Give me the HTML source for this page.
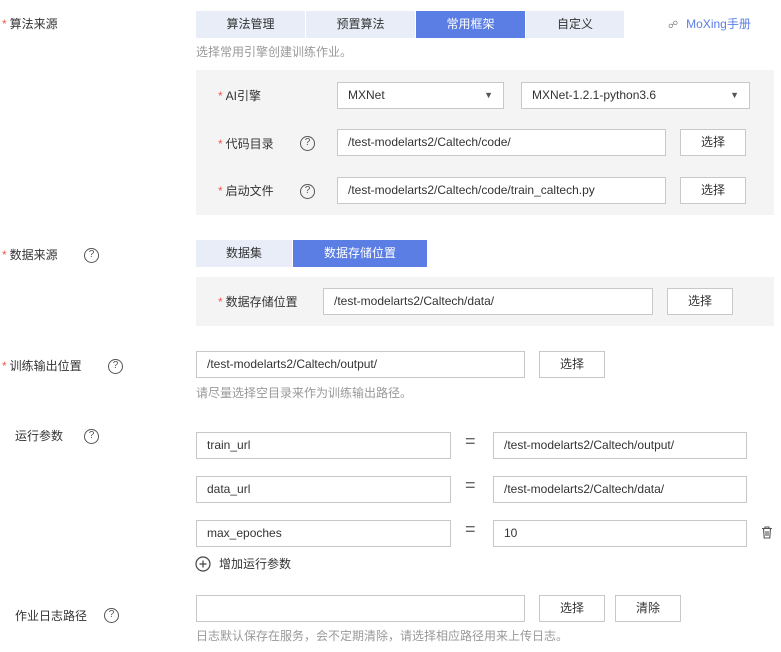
<!DOCTYPE html>
<html><head><meta charset="utf-8"><style>
*{box-sizing:border-box;margin:0;padding:0}
body{width:781px;height:652px;background:#fff;position:relative;overflow:hidden;font-family:"Liberation Sans","Noto Sans CJK SC",sans-serif;font-size:12px;color:#333}
.a{position:absolute}
.lbl{position:absolute;line-height:16px;white-space:nowrap}
.st{color:#e8604c;margin-right:3px}
.tab{position:absolute;height:27px;line-height:27px;text-align:center;background:#e8edf8;color:#333}
.tab.on{background:#5b7ee5;color:#fff}
.in{position:absolute;height:27px;border:1px solid #c8c8c8;background:#fff;line-height:25px;padding-left:10px;color:#333;white-space:nowrap}
.btn{position:absolute;height:27px;border:1px solid #c8c8c8;background:#fff;line-height:25px;text-align:center;color:#333}
.hint{position:absolute;color:#999;line-height:14px;white-space:nowrap}
.q{position:absolute;width:15px;height:15px;border:1.3px solid #555;border-radius:50%;font-size:10px;line-height:12px;text-align:center;color:#555}
.panel{position:absolute;background:#f4f4f4}
.arr{position:absolute;right:10px;top:0;font-size:9px;color:#555}
.eq{position:absolute;font-size:18px;color:#666;line-height:18px}
</style></head><body>
<div class="lbl" style="left:2px;top:16px"><span class="st">*</span>算法来源</div>
<div class="tab" style="left:196px;top:11px;width:109px">算法管理</div>
<div class="tab" style="left:306px;top:11px;width:109px">预置算法</div>
<div class="tab on" style="left:416px;top:11px;width:109px">常用框架</div>
<div class="tab" style="left:526px;top:11px;width:98px">自定义</div>
<div class="lbl" style="left:668px;top:16px;color:#5b7ee5"><span style="color:#888;font-size:10px;margin-right:8px">&#x260D;</span>MoXing手册</div>
<div class="hint" style="left:196px;top:45px">选择常用引擎创建训练作业。</div>
<div class="panel" style="left:196px;top:70px;width:578px;height:145px"></div>
<div class="lbl" style="left:218px;top:88px"><span class="st">*</span>AI引擎</div>
<div class="in" style="left:337px;top:82px;width:167px">MXNet<span class="arr">▼</span></div>
<div class="in" style="left:521px;top:82px;width:229px">MXNet-1.2.1-python3.6<span class="arr">▼</span></div>
<div class="lbl" style="left:218px;top:136px"><span class="st">*</span>代码目录</div>
<div class="q" style="left:300px;top:136px">?</div>
<div class="in" style="left:337px;top:129px;width:329px">/test-modelarts2/Caltech/code/</div>
<div class="btn" style="left:680px;top:129px;width:66px">选择</div>
<div class="lbl" style="left:218px;top:183px"><span class="st">*</span>启动文件</div>
<div class="q" style="left:300px;top:184px">?</div>
<div class="in" style="left:337px;top:177px;width:329px">/test-modelarts2/Caltech/code/train_caltech.py</div>
<div class="btn" style="left:680px;top:177px;width:66px">选择</div>

<div class="lbl" style="left:2px;top:247px"><span class="st">*</span>数据来源</div>
<div class="q" style="left:84px;top:248px">?</div>
<div class="tab" style="left:196px;top:240px;width:96px">数据集</div>
<div class="tab on" style="left:293px;top:240px;width:134px">数据存储位置</div>
<div class="panel" style="left:196px;top:277px;width:578px;height:49px"></div>
<div class="lbl" style="left:218px;top:294px"><span class="st">*</span>数据存储位置</div>
<div class="in" style="left:323px;top:288px;width:330px">/test-modelarts2/Caltech/data/</div>
<div class="btn" style="left:667px;top:288px;width:66px">选择</div>

<div class="lbl" style="left:2px;top:358px"><span class="st">*</span>训练输出位置</div>
<div class="q" style="left:108px;top:359px">?</div>
<div class="in" style="left:196px;top:351px;width:329px">/test-modelarts2/Caltech/output/</div>
<div class="btn" style="left:539px;top:351px;width:66px">选择</div>
<div class="hint" style="left:196px;top:386px">请尽量选择空目录来作为训练输出路径。</div>

<div class="lbl" style="left:15px;top:428px">运行参数</div>
<div class="q" style="left:84px;top:429px">?</div>
<div class="in" style="left:196px;top:432px;width:255px">train_url</div>
<div class="eq" style="left:465px;top:432px">=</div>
<div class="in" style="left:493px;top:432px;width:254px">/test-modelarts2/Caltech/output/</div>
<div class="in" style="left:196px;top:476px;width:255px">data_url</div>
<div class="eq" style="left:465px;top:476px">=</div>
<div class="in" style="left:493px;top:476px;width:254px">/test-modelarts2/Caltech/data/</div>
<div class="in" style="left:196px;top:520px;width:255px">max_epoches</div>
<div class="eq" style="left:465px;top:520px">=</div>
<div class="in" style="left:493px;top:520px;width:254px">10</div>
<svg class="a" style="left:761px;top:526px" width="12" height="13" viewBox="0 0 12 13"><path d="M1 2.5h10M4 2.5V1h4v1.5M2.5 2.5l.7 9.5h5.6l.7-9.5M5 5v5M7 5v5" fill="none" stroke="#555" stroke-width="1.1"/></svg>
<svg class="a" style="left:195px;top:556px" width="16" height="16" viewBox="0 0 16 16"><circle cx="8" cy="8" r="7" fill="none" stroke="#444" stroke-width="1.2"/><path d="M8 4.5v7M4.5 8h7" stroke="#444" stroke-width="1.2"/></svg>
<div class="lbl" style="left:219px;top:556px">增加运行参数</div>

<div class="lbl" style="left:15px;top:608px">作业日志路径</div>
<div class="q" style="left:104px;top:608px">?</div>
<div class="in" style="left:196px;top:595px;width:329px"></div>
<div class="btn" style="left:539px;top:595px;width:66px">选择</div>
<div class="btn" style="left:615px;top:595px;width:66px">清除</div>
<div class="hint" style="left:196px;top:629px">日志默认保存在服务，会不定期清除，请选择相应路径用来上传日志。</div>
</body></html>
